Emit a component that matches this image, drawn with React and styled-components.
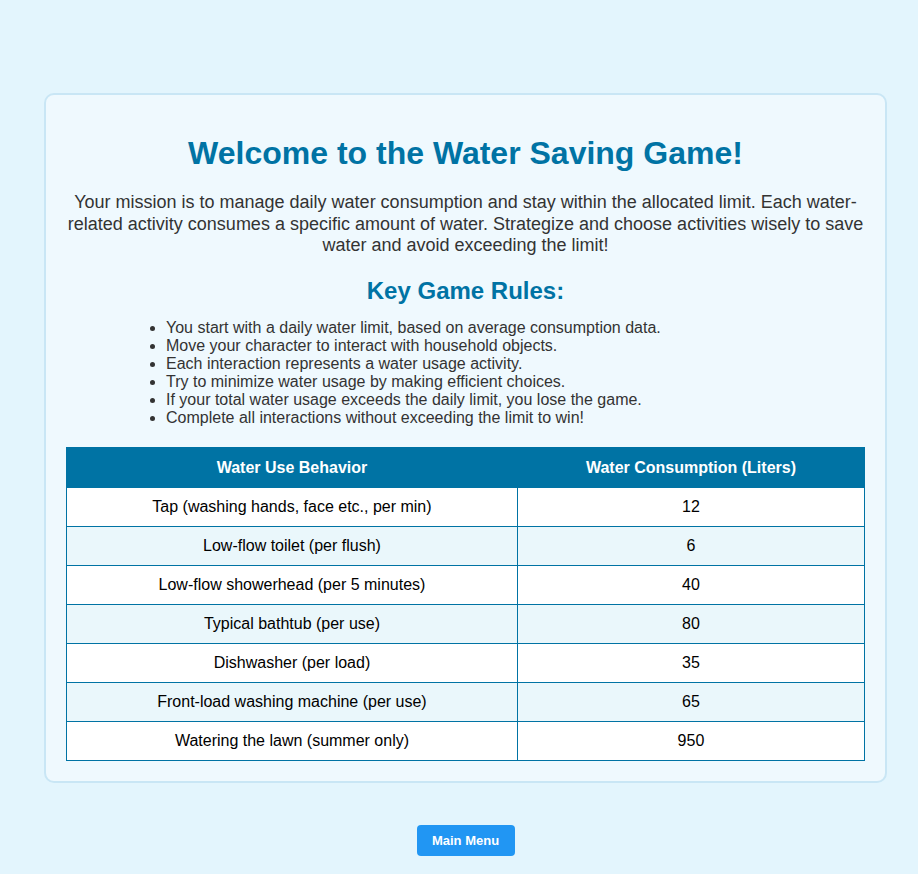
import React from 'react'
import styled, { createGlobalStyle } from 'styled-components'

const GlobalStyle = createGlobalStyle`
  html, body {
    margin: 0;
    padding: 0;
    background: #e3f5fd;
    font-family: "Liberation Sans", Arial, sans-serif;
  }
`

const Page = styled.div`
  display: flex;
  flex-direction: column;
  align-items: center;
  padding: 93px 0 18px 13px;
`

const Card = styled.div`
  box-sizing: border-box;
  width: 843px;
  padding: 20px;
  background: #eff9fe;
  border: 2px solid #c9e6f5;
  border-radius: 10px;
  text-align: center;
`

const Title = styled.h1`
  margin: 20px 0 20px;
  font-size: 32px;
  line-height: 37px;
  font-weight: bold;
  color: #0073a4;
`

const Intro = styled.p`
  margin: 0 0 20px;
  font-size: 18px;
  line-height: 21.7px;
  color: #333;
`

const Subtitle = styled.h2`
  margin: 0 0 14px;
  font-size: 24px;
  line-height: 28px;
  font-weight: bold;
  color: #0073a4;
`

const Rules = styled.ul`
  margin: 0 0 20px;
  padding-left: 100px;
  text-align: left;
  font-size: 16px;
  line-height: 18px;
  color: #333;
`

const Table = styled.table`
  width: 100%;
  border-collapse: collapse;
  font-size: 16px;
  color: #000;
`

const Th = styled.th`
  background: #0073a4;
  color: #fff;
  font-weight: bold;
  height: 39px;
  padding: 0 10px;
  border: 1px solid #0073a4;
`

const Row = styled.tr`
  background: ${p => (p.$alt ? '#eaf7fb' : '#fff')};
`

const Td = styled.td`
  height: 38px;
  padding: 0 10px;
  border: 1px solid #0073a4;
`

const MenuButton = styled.button`
  margin-top: 42px;
  width: 98px;
  height: 31px;
  border: none;
  border-radius: 4px;
  background: #2196f3;
  color: #fff;
  font-family: "Liberation Sans", Arial, sans-serif;
  font-size: 13px;
  font-weight: bold;
  cursor: pointer;
`

const rules = [
  'You start with a daily water limit, based on average consumption data.',
  'Move your character to interact with household objects.',
  'Each interaction represents a water usage activity.',
  'Try to minimize water usage by making efficient choices.',
  'If your total water usage exceeds the daily limit, you lose the game.',
  'Complete all interactions without exceeding the limit to win!',
]

const usage = [
  ['Tap (washing hands, face etc., per min)', 12],
  ['Low-flow toilet (per flush)', 6],
  ['Low-flow showerhead (per 5 minutes)', 40],
  ['Typical bathtub (per use)', 80],
  ['Dishwasher (per load)', 35],
  ['Front-load washing machine (per use)', 65],
  ['Watering the lawn (summer only)', 950],
]

export default function App() {
  return (
    <>
      <GlobalStyle />
      <Page>
        <Card>
          <Title>Welcome to the Water Saving Game!</Title>
          <Intro>
            Your mission is to manage daily water consumption and stay within the allocated limit. Each water-related
            activity consumes a specific amount of water. Strategize and choose activities wisely to save water and
            avoid exceeding the limit!
          </Intro>
          <Subtitle>Key Game Rules:</Subtitle>
          <Rules>
            {rules.map(r => (
              <li key={r}>{r}</li>
            ))}
          </Rules>
          <Table>
            <thead>
              <tr>
                <Th>Water Use Behavior</Th>
                <Th>Water Consumption (Liters)</Th>
              </tr>
            </thead>
            <tbody>
              {usage.map(([name, liters], i) => (
                <Row key={name} $alt={i % 2 === 1}>
                  <Td>{name}</Td>
                  <Td>{liters}</Td>
                </Row>
              ))}
            </tbody>
          </Table>
        </Card>
        <MenuButton>Main Menu</MenuButton>
      </Page>
    </>
  )
}
